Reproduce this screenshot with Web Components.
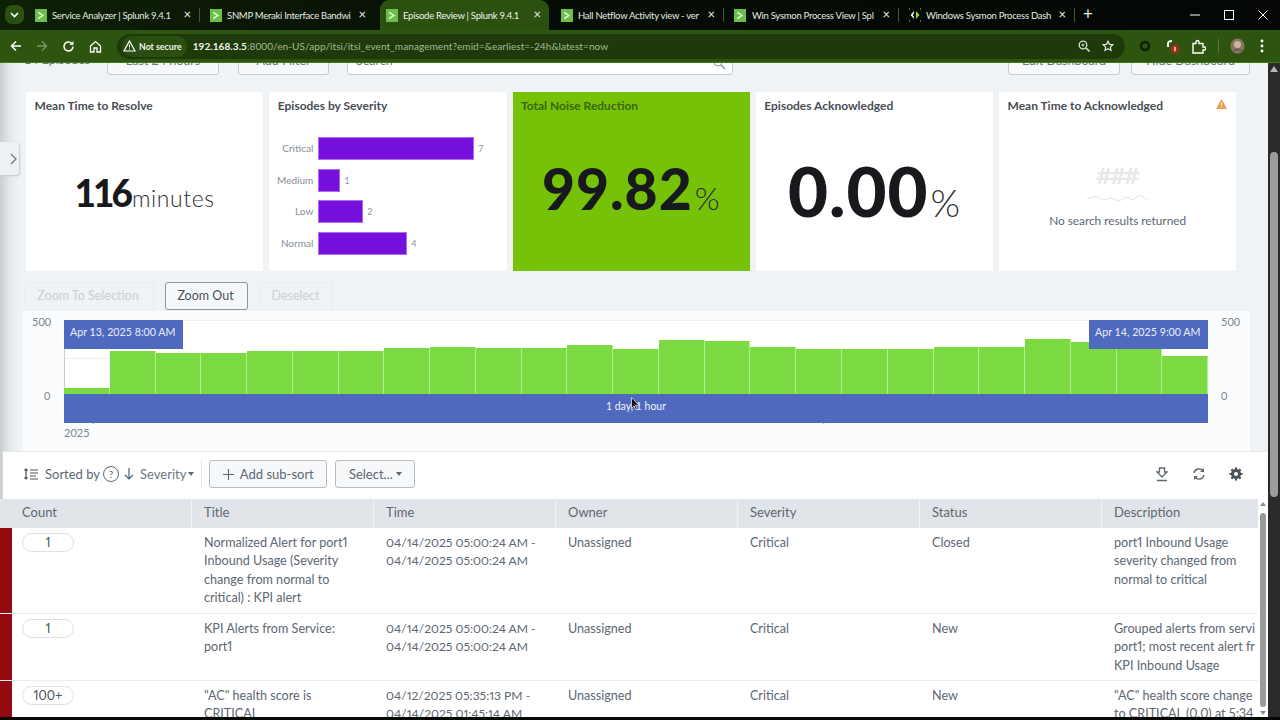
<!DOCTYPE html>
<html lang="en"><head><meta charset="utf-8"><title>Episode Review</title>
<style>
html,body{margin:0;padding:0;background:#050705;width:1280px;height:720px;overflow:hidden;font-family:Lato,"Liberation Sans",sans-serif}
</style></head><body>
<x-app>
  <x-chrome></x-chrome>
  <x-page>
    <x-topbar></x-topbar>
    <x-panels>
      <x-panel title="Mean Time to Resolve"><x-single value="116" unit="minutes" size="37" usize="23" pad="61.500" ls="-3"></x-single></x-panel>
      <x-panel title="Episodes by Severity"><x-severity></x-severity></x-panel>
      <x-panel title="Total Noise Reduction" green><x-single value="99.82" unit="%" size="57" usize="32" pad="47.500" ls="1"></x-single></x-panel>
      <x-panel title="Episodes Acknowledged"><x-single value="0.00" unit="%" size="69" usize="38" pad="43" ls="1"></x-single></x-panel>
      <x-panel title="Mean Time to Acknowledged" warn><x-empty></x-empty></x-panel>
    </x-panels>
    <x-zoombar></x-zoombar>
    <x-timeline></x-timeline>
    <x-sortbar></x-sortbar>
    <x-table>
      <x-row count="1"><span>Normalized Alert for port1<br>Inbound Usage (Severity<br>change from normal to<br>critical) : KPI alert</span><span>04/14/2025 05:00:24 AM -<br>04/14/2025 05:00:24 AM</span><span>Unassigned</span><span>Critical</span><span>Closed</span><span>port1 Inbound Usage<br>severity changed from<br>normal to critical</span></x-row>
      <x-row count="1" h="67"><span>KPI Alerts from Service:<br>port1</span><span>04/14/2025 05:00:24 AM -<br>04/14/2025 05:00:24 AM</span><span>Unassigned</span><span>Critical</span><span>New</span><span>Grouped alerts from servi<br>port1; most recent alert fr<br>KPI Inbound Usage</span></x-row>
      <x-row count="100+" h="60"><span>"AC" health score is<br>CRITICAL</span><span>04/12/2025 05:35:13 PM -<br>04/14/2025 01:45:14 AM</span><span>Unassigned</span><span>Critical</span><span>New</span><span>"AC" health score change<br>to CRITICAL (0.0) at 5:34</span></x-row>
    </x-table>
  </x-page>
</x-app>
<script>
const def=(name,html,init)=>customElements.define(name,class extends HTMLElement{
  constructor(){super();this.attachShadow({mode:'open'})}
  connectedCallback(){this.shadowRoot.innerHTML=typeof html==='function'?html(this):html;init&&init(this)}
});
const ICO={
 fav:'<svg width="12" height="13" viewBox="0 0 13 13" preserveAspectRatio="none" style="flex:none"><rect width="13" height="13" fill="#6cc04a"/><path d="M3.500 2.500 10 6.500 3.500 10.500V8.600L7.400 6.500 3.500 4.400z" fill="#e8f6df"/></svg>',
 fav2:'<svg width="14" height="14" viewBox="0 0 14 14" style="flex:none"><path d="M6 3 2.500 7 6 11V8.800L4.800 7 6 5.200z" fill="#e8f0e0"/><path d="M8 3l3.500 4L8 11z" fill="#9bd34a"/><path d="M1 1h1M12 1h1M1 13h1M12 13h1" stroke="#ccc"/></svg>',
};
def('x-app',`<style>:host{display:flex;flex-direction:column;width:1280px;height:720px;overflow:hidden}</style><slot></slot>`);

def('x-tab',h=>`<style>
:host{display:flex;align-items:center;box-sizing:border-box;width:${h.getAttribute('w')||175}px;height:30px;padding-left:${h.getAttribute('pl')||10}px;flex:none;position:relative;color:#e6ebe2;font:400 9.500px Lato,sans-serif;letter-spacing:-.27px}
:host([active]){background:#2c500f;border-radius:9px 9px 0 0;color:#f1f5ec;margin-left:5px}
.t{margin-left:${h.getAttribute('g')||5}px;white-space:nowrap}
.x{position:absolute;right:${h.getAttribute('xr')||9}px;top:8px;font-size:13px;line-height:13px;color:#e8ece4;letter-spacing:0}
.s{position:absolute;right:0;top:8px;width:1px;height:14px;background:#4a5244}
</style>${h.hasAttribute('alt')?ICO.fav2:ICO.fav}<span class="t"><slot></slot></span><span class="x">×</span>${h.hasAttribute('sep')?'<i class="s"></i>':''}`);

def('x-chrome',`<style>
:host{display:block;height:63px;flex:none;color:#e8ece4}
.strip{height:30px;background:linear-gradient(90deg,#0e2006,#060c06 45%,#040704);display:flex;align-items:flex-end}
.dd{width:19px;height:19px;border-radius:7px;background:#2c500f;margin:0 1px 6px 5px;flex:none;display:grid;place-items:center}
.plus{font:400 17px Lato,sans-serif;margin:0 0 6px 3px;width:20px;text-align:center}
.win{margin-left:auto;display:flex;align-items:center;height:30px}
.win span{width:34px;display:grid;place-items:center}
.bar{height:33px;background:#2d5510;display:flex;align-items:center;border-bottom:1px solid #3f7a12;box-sizing:border-box}
.nav{width:26.300px;display:grid;place-items:center;flex:none}
.omni{margin-left:8.800px;width:1008px;height:25px;border-radius:13px;background:#1e3a0a;display:flex;align-items:center;flex:none;box-sizing:border-box;padding-left:5px}
.sec{display:flex;align-items:center;gap:3px;height:21px;background:#2a4d10;border-radius:11px;padding:0 5px 0 1px;font:700 8.800px Lato,sans-serif;color:#f1f5ec;white-space:nowrap}
.url{margin-left:6px;font:400 10.100px Lato,sans-serif;color:#a6b69a;white-space:nowrap;letter-spacing:.03px}
.url b{color:#f2f5ee;font-weight:700}
.oi{margin-left:auto;display:flex;align-items:center;gap:12px;margin-right:11px}
.right{display:flex;align-items:center;flex:1;position:relative}
</style>
<div class="strip">
  <div class="dd"><svg width="9" height="6" viewBox="0 0 9 6"><path d="M1 1l3.500 3.500L8 1" fill="none" stroke="#fff" stroke-width="1.600"/></svg></div>
  <x-tab sep>Service Analyzer | Splunk 9.4.1</x-tab>
  <x-tab>SNMP Meraki Interface Bandwi</x-tab>
  <x-tab active w="169" pl="6" xr="8">Episode Review | Splunk 9.4.1</x-tab>
  <x-tab sep w="175" pl="12">Hall Netflow Activity view - ver</x-tab>
  <x-tab sep w="175" pl="10" g="6">Win Sysmon Process View | Spl</x-tab>
  <x-tab sep w="176" pl="9" g="4" alt>Windows Sysmon Process Dash</x-tab>
  <span class="plus">+</span>
  <div class="win">
    <span><svg width="10" height="10"><path d="M0 5h10" stroke="#fff"/></svg></span>
    <span><svg width="10" height="10"><rect x=".5" y=".5" width="9" height="9" fill="none" stroke="#fff"/></svg></span>
    <span><svg width="10" height="10"><path d="M.5.500l9 9M9.500.500l-9 9" stroke="#fff"/></svg></span>
  </div>
</div>
<div class="bar">
  <span class="nav" style="margin-left:3px"><svg width="12" height="12" viewBox="0 0 12 12"><path d="M11 6H2M6 1.500 1.500 6 6 10.500" fill="none" stroke="#fff" stroke-width="1.500"/></svg></span>
  <span class="nav"><svg width="12" height="12" viewBox="0 0 12 12"><path d="M1 6h9M6 1.500 10.500 6 6 10.500" fill="none" stroke="#7d9668" stroke-width="1.300"/></svg></span>
  <span class="nav"><svg width="13" height="13" viewBox="0 0 13 13"><path d="M11 6.500A4.500 4.500 0 1 1 9.700 3.300" fill="none" stroke="#fff" stroke-width="1.500"/><path d="M11.500 1v4h-4z" fill="#fff"/></svg></span>
  <span class="nav"><svg width="13" height="13" viewBox="0 0 13 13"><path d="M1.500 6 6.500 1.500 11.500 6V12H8V8H5V12H1.500z" fill="none" stroke="#fff" stroke-width="1.300"/></svg></span>
  <div class="omni">
    <div class="sec"><svg width="13" height="12" viewBox="0 0 13 12"><path d="M6.500 1 12 11H1z" fill="none" stroke="#fff" stroke-width="1.200"/><path d="M6.500 4.500v3M6.500 8.500v1" stroke="#fff"/></svg>Not secure</div>
    <div class="url"><b>192.168.3.5</b>:8000/en-US/app/itsi/itsi_event_management?emid=&amp;earliest=-24h&amp;latest=now</div>
    <div class="oi">
      <svg width="12" height="12" viewBox="0 0 12 12"><circle cx="5" cy="5" r="3.800" fill="none" stroke="#d8e0d0" stroke-width="1.300"/><path d="M8 8l3.500 3.500" stroke="#d8e0d0" stroke-width="1.600"/><path d="M3.500 5h3M5 3.500v3" stroke="#d8e0d0"/></svg>
      <svg width="12" height="12" viewBox="0 0 24 24"><path d="M12 2.500l2.900 6.200 6.800.8-5 4.700 1.300 6.700L12 17.600l-6 3.300 1.300-6.700-5-4.700 6.800-.8z" fill="none" stroke="#e4eadc" stroke-width="2.400"/></svg>
    </div>
  </div>
  <div class="right">
    <svg style="margin-left:14px" width="12" height="12"><circle cx="6" cy="6" r="4" fill="none" stroke="#111f08" stroke-width="2.500"/></svg>
    <svg style="margin-left:14px" width="16" height="16" viewBox="0 0 16 16"><path d="M3 9V5.500Q3 3 7 3" fill="none" stroke="#f2f2f2" stroke-width="2"/><circle cx="10" cy="11" r="4.500" fill="#a12a1c"/><path d="M10 8.800v4.500" stroke="#fff" stroke-width="1.200"/></svg>
    <svg style="margin-left:10px" width="15" height="15" viewBox="0 0 15 15"><path d="M2 4.500h3V3a1.500 1.500 0 0 1 3 0v1.500h4v3.500h1.200a1.500 1.500 0 0 1 0 3H12v3H2z" fill="none" stroke="#fff" stroke-width="1.400"/></svg>
    <i style="margin-left:12px;width:1px;height:14px;background:#5d7a45"></i>
    <svg style="margin-left:11px" width="15" height="16" viewBox="0 0 15 16"><ellipse cx="7.500" cy="8" rx="7" ry="7.500" fill="#8d7462"/><circle cx="7.500" cy="6.500" r="3.500" fill="#c9b6a4"/><path d="M2 13q5.500-5 11 0" fill="#6d5b58"/></svg>
    <svg style="margin-left:15px" width="4" height="14"><circle cx="2" cy="2" r="1.400" fill="#fff"/><circle cx="2" cy="7" r="1.400" fill="#fff"/><circle cx="2" cy="12" r="1.400" fill="#fff"/></svg>
  </div>
</div>`);

def('x-page',`<style>
:host{display:flex;height:654px;flex:none;overflow:hidden;background:#eff3f5}
.main{width:1268px;flex:none;position:relative;background:linear-gradient(90deg,#c9cdce,#e6e9eb 10px,#eff3f5 20px)}
.h{position:absolute;left:0;top:79px;width:19px;height:33px;box-sizing:border-box;padding-right:2px;background:#eef1f3;border-radius:0 3px 3px 0;box-shadow:1px 1px 2px #c4c8cb;display:flex;align-items:center;justify-content:flex-end;z-index:3}
.sb{width:12px;flex:none;background:#2a2a2a;position:relative}
.sb .a{margin:3px auto 0;width:0;border:4px solid transparent;border-top:0;border-bottom:6px solid #b5b5b5}
.sb .th{margin:80px auto 0;width:8px;height:345px;border-radius:4px;background:#9c9c9c}
</style>
<div class="main"><div class="h"><svg width="7" height="12" viewBox="0 0 7 12"><path d="M1 1l5 5-5 5" fill="none" stroke="#6b7480" stroke-width="1.200"/></svg></div><slot></slot></div>
<div class="sb"><div class="a"></div><div class="th"></div></div>`);

def('x-topbar',`<style>
:host{display:flex;height:12px;align-items:flex-end;overflow:hidden;color:#6b7683;font:400 12.500px Lato,sans-serif}
div{height:28px;box-sizing:border-box;border:1px solid #c3cbd4;border-radius:3px;background:#f7f8fa;text-align:center;line-height:26px;flex:none;white-space:nowrap}
.l{border:0;background:none;width:66px;margin-left:24px;text-align:left}
.i{background:#fff;text-align:left;padding-left:8px;position:relative}
</style>
<div class="l">14 Episodes</div><div style="width:112px;margin-left:17px">Last 24 hours</div><div style="width:91px;margin-left:19px">Add Filter</div>
<div class="i" style="width:386px;margin-left:18px">Search<svg style="position:absolute;right:6px;top:7px" width="14" height="18"><circle cx="6" cy="7" r="4" fill="none" stroke="#8b95a0"/><path d="M9 10l4 4" stroke="#8b95a0" stroke-width="1.500"/></svg></div>
<div style="width:112px;margin-left:275px">Edit Dashboard</div><div style="width:119px;margin-left:11px">Hide Dashboard</div>`);

def('x-panels',`<style>:host{display:grid;grid-template-columns:repeat(5,237.250px);gap:6px;height:179px;margin:17px 0 0 26px}</style><slot></slot>`);

def('x-panel',h=>`<style>
:host{display:flex;flex-direction:column;background:${h.hasAttribute('green')?'#76c208':'#fff'};min-width:0;position:relative}
h3{margin:0;padding:6.500px 8px 0 8.500px;font:700 12px/14px Lato,sans-serif;color:${h.hasAttribute('green')?'#3d6510':'#474d55'};white-space:nowrap}
.b{flex:1;display:flex;min-height:0}
svg{position:absolute;right:9px;top:7px}
</style><h3>${h.getAttribute('title')}</h3><div class="b"><slot></slot></div>
${h.hasAttribute('warn')?'<svg width="11" height="10" viewBox="0 0 11 10"><path d="M5.500 0 11 10H0z" fill="#e5a050"/><path d="M5.500 3.500v3M5.500 7.500v1" stroke="#fff"/></svg>':''}`);

def('x-single',h=>`<style>
:host{flex:1;display:flex;align-items:baseline;justify-content:center;padding-top:${h.getAttribute('pad')}px;box-sizing:border-box;color:#17191c;font-family:Lato,sans-serif;white-space:nowrap}
b{font-size:${h.getAttribute('size')}px;line-height:${h.getAttribute('size')}px;font-weight:900;letter-spacing:${h.getAttribute('ls')}px}
span{font-size:${h.getAttribute('usize')}px;line-height:${h.getAttribute('usize')}px;font-weight:300;color:#2b2f33;letter-spacing:.6px;margin-left:2px}
</style><b>${h.getAttribute('value')}</b><span>${h.getAttribute('unit')}</span>`);

def('x-severity',`<style>
:host{flex:1;display:grid;grid-template-columns:44px 1fr;grid-auto-rows:23px;row-gap:8.500px;column-gap:5px;padding:24.500px 0 0 0;font:400 10px Lato,sans-serif;color:#858e98;align-content:start}
.l{text-align:right;line-height:23px}
.r{display:flex;align-items:center;gap:4px;color:#8a939c;font-size:9px}
i{display:block;height:23px;background:#7510dc;box-sizing:border-box;border:1px solid #b06cf0}
</style>
<div class="l">Critical</div><div class="r"><i style="width:156px"></i>7</div>
<div class="l">Medium</div><div class="r"><i style="width:22px"></i>1</div>
<div class="l">Low</div><div class="r"><i style="width:45px"></i>2</div>
<div class="l">Normal</div><div class="r"><i style="width:89px"></i>4</div>`);

def('x-empty',`<style>
:host{flex:1;display:flex;flex-direction:column;align-items:center;padding-top:51.500px;font:400 11.800px Lato,sans-serif;color:#5c6773}
b{font:700 22px/26px "DejaVu Sans",sans-serif;color:#e6e8ea;letter-spacing:-4.500px;margin-left:-4px}
svg{margin:3px 0 10px}
</style><b>###</b><svg width="64" height="10" viewBox="0 0 64 10"><path d="M1 6l8-3 8 4 8-2 8 3 8-4 6 3 7-5 8 5" fill="none" stroke="#dfe2e5"/></svg><span>No search results returned</span>`);

def('x-zoombar',`<style>
:host{display:flex;height:28px;margin:11px 0 1px 24px;font:400 12.500px/26px Lato,sans-serif}
div{box-sizing:border-box;border:1px solid #eaedf0;border-radius:3px;color:#c9cfd4;text-align:center;flex:none;padding-right:2px}
.on{border-color:#8e979f;color:#4a525a;background:#f5f7f8;margin:0 12px 0 11px}
</style><div style="width:130px">Zoom To Selection</div><div class="on" style="width:83px">Zoom Out</div><div style="width:73px">Deselect</div>`);

const BARS=[6,43,41,41,43,43,43,46,47,46,46,49,45,54,53,47,45,45,45,47,47,55,52,50,38];
def('x-timeline',`<style>
:host{display:block;box-sizing:border-box;height:140px;margin-left:23px;width:1227px;background:#fbfcfd;position:relative;font:400 11px Lato,sans-serif;color:#7b8590}
.plot{position:absolute;left:41px;top:9px;width:1144px;height:74px;background:#fff;display:flex;align-items:flex-end;border-top:1px solid #eceff1;box-shadow:inset 1px 0 #c5cbe0;box-sizing:border-box;background-image:linear-gradient(#eceff1,#eceff1);background-size:100% 1px;background-position:0 37px;background-repeat:no-repeat}
.plot i{flex:1;background:#7bd942;border-right:1.500px solid #b2ef8c;box-sizing:border-box}
.y{position:absolute;line-height:12px}
.band{position:absolute;left:41px;top:83px;width:1144px;height:29px;background:#4f69bf;color:#eef2fb;text-align:center;line-height:24px;font-size:10.500px}
.tag{position:absolute;top:9px;height:29px;background:#4f69bf;color:#e9eefb;line-height:24px;font-size:10.700px;padding:0 6px;box-sizing:border-box;white-space:nowrap}
.cur{position:absolute;left:608px;top:86px}
.d{position:absolute;top:101px;color:#a2aab2;line-height:12px}
</style>
<span class="d" style="left:41px">Sun Apr 13</span><span class="d" style="left:767px">Mon Apr 14</span>
<span class="d" style="left:41px;top:116px;color:#7b8590">2025</span>
<span class="y" style="left:9px;top:5px">500</span><span class="y" style="left:21px;top:79px">0</span>
<span class="y" style="left:1198px;top:5px">500</span><span class="y" style="left:1198px;top:79px">0</span>
<div class="plot">${BARS.map(b=>`<i style="height:${b}px"></i>`).join('')}</div>
<div class="band">1 day, 1 hour</div>
<div class="tag" style="left:41px;width:119px">Apr 13, 2025 8:00 AM</div>
<div class="tag" style="left:1066px;width:119px">Apr 14, 2025 9:00 AM</div>
<svg class="cur" width="9" height="14" viewBox="0 0 9 14"><path d="M.5.500v11l2.500-2.500 2 4 1.500-.7-2-4H8z" fill="#111" stroke="#fff" stroke-width=".7"/></svg>`);

def('x-sortbar',`<style>
:host{display:flex;align-items:center;height:48px;background:#fff;border-top:1px solid #e6e9ec;box-sizing:border-box;font:400 13px Lato,sans-serif;color:#5c6773;margin-left:3px;padding:0 0 3px 21px}
.q{width:14px;height:14px;border:1.300px solid #5c6773;border-radius:50%;font-size:10px;line-height:14px;text-align:center;margin:0 5px 0 3px;flex:none}
.sev{margin-left:6px;display:flex;align-items:center;gap:2px;color:#6b7683}
.c{width:0;border:3px solid transparent;border-bottom:0;border-top:4px solid #5c6773}
.sep{width:1px;height:28px;background:#e2e6e9;margin:0 7px}
.btn{height:28px;box-sizing:border-box;border:1px solid #b5bcc3;border-radius:3px;background:#f7f8fa;display:flex;align-items:center;justify-content:center;gap:3px;flex:none}
.ic{display:flex;margin-left:auto;margin-right:25px;gap:23px;align-items:center}
</style>
<svg width="14" height="12" viewBox="0 0 14 12" style="margin-right:7px"><path d="M2 1v10M.5 2.500 2 1l1.500 1.500M.5 9.500 2 11l1.500-1.500M6 2h8M6 5h8M6 8h6M6 11h8" fill="none" stroke="#4a525a" stroke-width="1.200"/></svg>
<span>Sorted by</span><span class="q">?</span>
<svg width="10" height="12" viewBox="0 0 10 12"><path d="M5 0v11M1 7l4 4 4-4" fill="none" stroke="#4a5f80" stroke-width="1.200"/></svg>
<span class="sev">Severity<i class="c"></i></span><i class="sep"></i>
<div class="btn" style="width:118px"><svg width="11" height="11"><path d="M5.500 0v11M0 5.500h11" stroke="#5c6773" stroke-width="1.100"/></svg><span>&nbsp;Add sub-sort</span></div>
<div class="btn" style="width:80px;margin-left:8px"><span>Select...</span><i class="c"></i></div>
<div class="ic">
 <svg width="14" height="15" viewBox="0 0 14 15"><path d="M4.500 1h5v4H12L7 10 2 5h2.500zM2 13.500h10" fill="none" stroke="#5c6773" stroke-width="1.300"/></svg>
 <svg width="14" height="14" viewBox="0 0 14 14"><path d="M2 6a5 5 0 0 1 9-2M12 8a5 5 0 0 1-9 2" fill="none" stroke="#5c6773" stroke-width="1.400"/><path d="M12 1v4H8zM2 13V9h4z" fill="#5c6773"/></svg>
 <svg width="14" height="14" viewBox="0 0 14 14"><circle cx="7" cy="7" r="3.500" fill="none" stroke="#4a525a" stroke-width="3"/><path d="M7 .5v13M.5 7h13M2.400 2.400l9.200 9.200M11.600 2.400l-9.200 9.200" stroke="#4a525a" stroke-width="2.200"/><circle cx="7" cy="7" r="2" fill="#fff"/></svg>
</div>`);

def('x-table',`<style>
:host{display:block;position:relative;background:#fff;height:218px;overflow:hidden;font:400 12.600px Lato,sans-serif;color:#5c6773;font-variant-numeric:proportional-nums}
.hd{display:grid;grid-template-columns:192px repeat(5,182px) 156px;height:29px;width:1258px;background:#e1e5e9;font-size:13px}
.hd div{line-height:27px;padding-left:12px;border-right:1px solid #f0f2f4;box-sizing:border-box}
.hd div:first-child{padding-left:22px}
.hd div:last-child{border:0}
.tr{position:absolute;right:2px;top:0;bottom:0;width:6px}
.up{position:absolute;top:3px;left:0;width:0;border:3px solid transparent;border-top:0;border-bottom:4px solid #8c8c8c}
.th{position:absolute;top:14px;bottom:10px;left:0;width:6px;border-radius:3px;background:#9b9b9b}
.dn{position:absolute;bottom:2px;left:0;width:0;border:3px solid transparent;border-bottom:0;border-top:4px solid #8c8c8c}
</style>
<div class="hd"><div>Count</div><div>Title</div><div>Time</div><div>Owner</div><div>Severity</div><div>Status</div><div>Description</div></div>
<slot></slot>
<div class="tr"><i class="up"></i><i class="th"></i><i class="dn"></i></div>`);

def('x-row',h=>`<style>
:host{display:grid;grid-template-columns:12px 180px repeat(5,182px) 156px;width:1258px;height:${h.getAttribute('h')||86}px;box-sizing:border-box;border-bottom:1px solid #e9ecef;line-height:18.500px;white-space:nowrap;overflow:hidden}
.red{background:#930b10}
.n{margin:5px 0 0 10px;width:52px;height:19px;box-sizing:border-box;border:1px solid #dde1e5;border-radius:10px;text-align:center;line-height:17px;color:#4a525a}
.g{display:grid;grid-column:3/-1;grid-template-columns:subgrid;padding-top:5.500px}
::slotted(span){padding-left:12px;overflow:hidden;display:block}
::slotted(span:nth-child(2)){font-size:12.100px}
</style><div class="red"></div><div><div class="n">${h.getAttribute('count')}</div></div><div class="g"><slot></slot></div>`);
</script>
</body></html>
